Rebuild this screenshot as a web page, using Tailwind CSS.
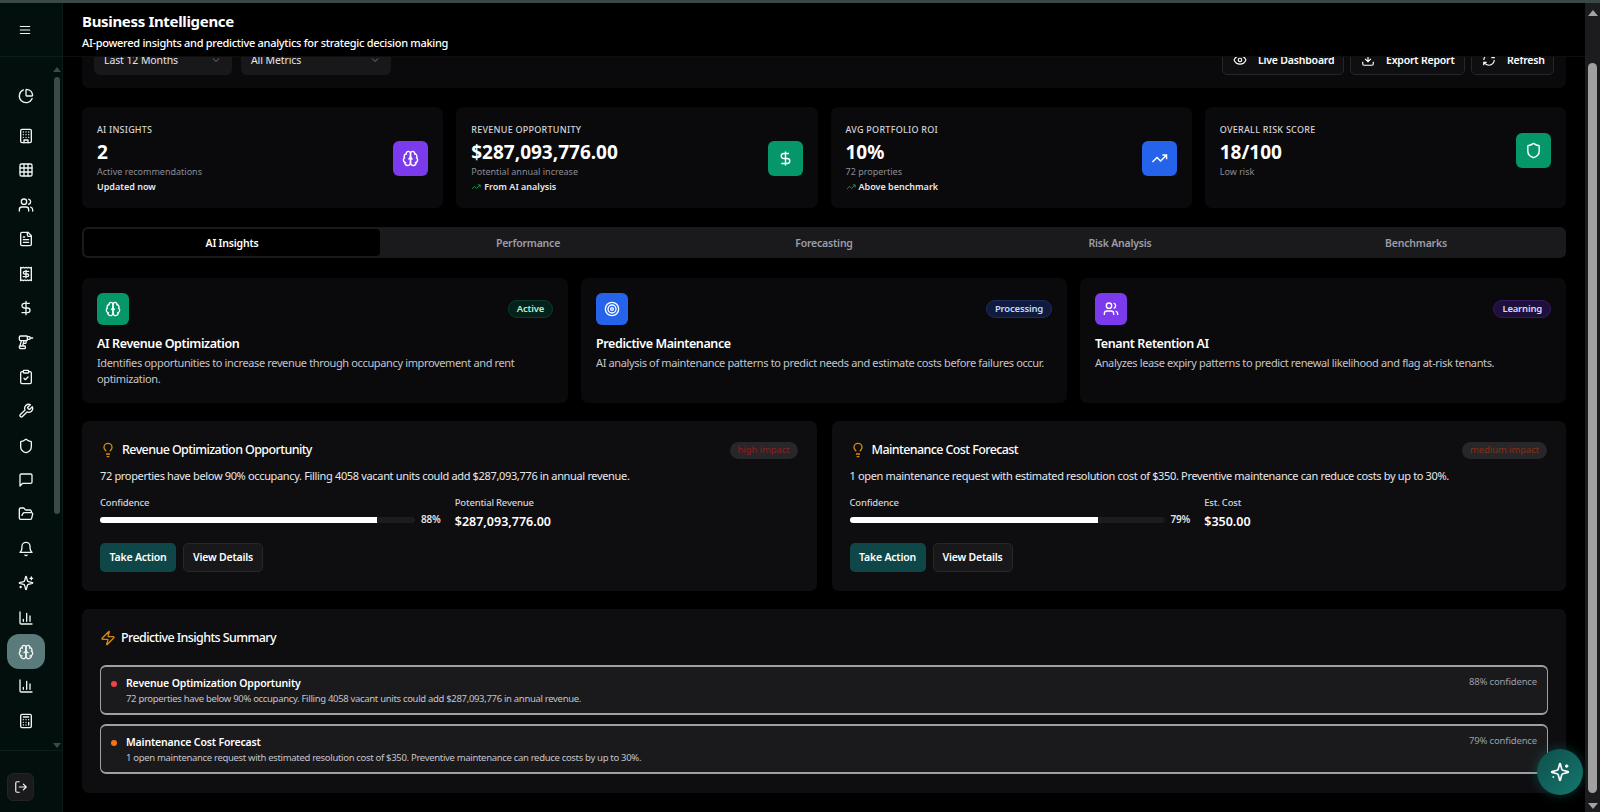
<!DOCTYPE html>
<html lang="en">
<head>
  <meta charset="UTF-8" />
  <title>Business Intelligence</title>
  <script src="https://cdn.jsdelivr.net/npm/@tailwindcss/browser@4"></script>
</head>
<body class="w-[1600px] h-[812px] overflow-hidden bg-black text-white font-['Noto_Sans',sans-serif] flex flex-col">
  <!-- icon sprite -->
  <svg class="hidden" xmlns="http://www.w3.org/2000/svg">
    <symbol id="i-menu" viewBox="0 0 24 24"><path d="M4 6h16M4 12h16M4 18h16"/></symbol>
    <symbol id="i-pie" viewBox="0 0 24 24"><path d="M21 12c.552 0 1.005-.449.95-.998a10 10 0 0 0-8.953-8.951c-.55-.055-.998.398-.998.95v8a1 1 0 0 0 1 1z"/><path d="M21.21 15.89A10 10 0 1 1 8 2.83"/></symbol>
    <symbol id="i-building" viewBox="0 0 24 24"><rect x="4" y="2" width="16" height="20" rx="2"/><path d="M9 22v-4h6v4M8 6h.01M16 6h.01M12 6h.01M12 10h.01M12 14h.01M16 10h.01M16 14h.01M8 10h.01M8 14h.01"/></symbol>
    <symbol id="i-grid" viewBox="0 0 24 24"><rect x="3" y="3" width="18" height="18" rx="2"/><path d="M3 9h18M3 15h18M9 3v18M15 3v18"/></symbol>
    <symbol id="i-users" viewBox="0 0 24 24"><path d="M16 21v-2a4 4 0 0 0-4-4H6a4 4 0 0 0-4 4v2"/><circle cx="9" cy="7" r="4"/><path d="M22 21v-2a4 4 0 0 0-3-3.87M16 3.13a4 4 0 0 1 0 7.75"/></symbol>
    <symbol id="i-file" viewBox="0 0 24 24"><path d="M15 2H6a2 2 0 0 0-2 2v16a2 2 0 0 0 2 2h12a2 2 0 0 0 2-2V7Z"/><path d="M14 2v4a2 2 0 0 0 2 2h4M10 9H8M16 13H8M16 17H8"/></symbol>
    <symbol id="i-receipt" viewBox="0 0 24 24"><path d="M4 2v20l2-1 2 1 2-1 2 1 2-1 2 1 2-1 2 1V2l-2 1-2-1-2 1-2-1-2 1-2-1-2 1Z"/><path d="M16 8h-6a2 2 0 1 0 0 4h4a2 2 0 1 1 0 4H8M12 17.5v-11"/></symbol>
    <symbol id="i-dollar" viewBox="0 0 24 24"><path d="M12 2v20M17 5H9.5a3.5 3.5 0 0 0 0 7h5a3.5 3.5 0 0 1 0 7H6"/></symbol>
    <symbol id="i-drill" viewBox="0 0 24 24"><path d="M14 9c0 .6-.4 1-1 1H4a2 2 0 0 1-2-2V5a2 2 0 0 1 2-2h9c.6 0 1 .4 1 1Z"/><path d="M18 6h4M14 4h3a1 1 0 0 1 1 1v2a1 1 0 0 1-1 1h-3M5 10l-2 8M12 10v3c0 .6-.4 1-1 1H8M7 18l2-8M5 22c-1.7 0-3-1.3-3-3 0-.6.4-1 1-1h7c.6 0 1 .4 1 1v2c0 .6-.4 1-1 1Z"/></symbol>
    <symbol id="i-clipboard" viewBox="0 0 24 24"><rect x="8" y="2" width="8" height="4" rx="1"/><path d="M16 4h2a2 2 0 0 1 2 2v14a2 2 0 0 1-2 2H6a2 2 0 0 1-2-2V6a2 2 0 0 1 2-2h2M9 14l2 2 4-4"/></symbol>
    <symbol id="i-wrench" viewBox="0 0 24 24"><path d="M14.7 6.3a1 1 0 0 0 0 1.4l1.6 1.6a1 1 0 0 0 1.4 0l3.77-3.77a6 6 0 0 1-7.94 7.94l-6.91 6.91a2.12 2.12 0 0 1-3-3l6.91-6.91a6 6 0 0 1 7.94-7.94l-3.76 3.76z"/></symbol>
    <symbol id="i-shield" viewBox="0 0 24 24"><path d="M20 13c0 5-3.5 7.5-7.66 8.95a1 1 0 0 1-.67-.01C7.5 20.5 4 18 4 13V6a1 1 0 0 1 1-1c2 0 4.5-1.2 6.24-2.72a1.17 1.17 0 0 1 1.52 0C14.51 3.81 17 5 19 5a1 1 0 0 1 1 1z"/></symbol>
    <symbol id="i-message" viewBox="0 0 24 24"><path d="M21 15a2 2 0 0 1-2 2H7l-4 4V5a2 2 0 0 1 2-2h14a2 2 0 0 1 2 2z"/></symbol>
    <symbol id="i-folder" viewBox="0 0 24 24"><path d="m6 14 1.5-2.9A2 2 0 0 1 9.24 10H20a2 2 0 0 1 1.94 2.5l-1.54 6a2 2 0 0 1-1.95 1.5H4a2 2 0 0 1-2-2V5a2 2 0 0 1 2-2h3.9a2 2 0 0 1 1.69.9l.81 1.2a2 2 0 0 0 1.67.9H18a2 2 0 0 1 2 2v2"/></symbol>
    <symbol id="i-bell" viewBox="0 0 24 24"><path d="M6 8a6 6 0 0 1 12 0c0 7 3 9 3 9H3s3-2 3-9M10.3 21a1.94 1.94 0 0 0 3.4 0"/></symbol>
    <symbol id="i-sparkles" viewBox="0 0 24 24"><path d="M9.937 15.5A2 2 0 0 0 8.5 14.063l-6.135-1.582a.5.5 0 0 1 0-.962L8.5 9.936A2 2 0 0 0 9.937 8.5l1.582-6.135a.5.5 0 0 1 .963 0L14.063 8.5A2 2 0 0 0 15.5 9.937l6.135 1.581a.5.5 0 0 1 0 .964L15.5 14.063a2 2 0 0 0-1.437 1.437l-1.582 6.135a.5.5 0 0 1-.963 0z"/><path d="M20 3v4M22 5h-4M4 17v2M5 18H3"/></symbol>
    <symbol id="i-chart" viewBox="0 0 24 24"><path d="M3 3v16a2 2 0 0 0 2 2h16M18 17V9M13 17V5M8 17v-3"/></symbol>
    <symbol id="i-brain" viewBox="0 0 24 24"><path d="M12 5a3 3 0 1 0-5.997.125 4 4 0 0 0-2.526 5.77 4 4 0 0 0 .556 6.588A4 4 0 1 0 12 18Z"/><path d="M12 5a3 3 0 1 1 5.997.125 4 4 0 0 1 2.526 5.77 4 4 0 0 1-.556 6.588A4 4 0 1 1 12 18Z"/><path d="M15 13a4.5 4.5 0 0 1-3-4 4.5 4.5 0 0 1-3 4M17.599 6.5a3 3 0 0 0 .399-1.375M6.003 5.125A3 3 0 0 0 6.401 6.5M3.477 10.896a4 4 0 0 1 .585-.396M19.938 10.5a4 4 0 0 1 .585.396M6 18a4 4 0 0 1-1.967-.516M19.967 17.484A4 4 0 0 1 18 18"/></symbol>
    <symbol id="i-calc" viewBox="0 0 24 24"><rect x="4" y="2" width="16" height="20" rx="2"/><path d="M8 6h8M16 14v4M16 10h.01M12 10h.01M8 10h.01M12 14h.01M8 14h.01M12 18h.01M8 18h.01"/></symbol>
    <symbol id="i-logout" viewBox="0 0 24 24"><path d="M9 21H5a2 2 0 0 1-2-2V5a2 2 0 0 1 2-2h4M16 17l5-5-5-5M21 12H9"/></symbol>
    <symbol id="i-eye" viewBox="0 0 24 24"><path d="M2.062 12.348a1 1 0 0 1 0-.696 10.75 10.75 0 0 1 19.876 0 1 1 0 0 1 0 .696 10.75 10.75 0 0 1-19.876 0"/><circle cx="12" cy="12" r="3"/></symbol>
    <symbol id="i-download" viewBox="0 0 24 24"><path d="M21 15v4a2 2 0 0 1-2 2H5a2 2 0 0 1-2-2v-4M7 10l5 5 5-5M12 15V3"/></symbol>
    <symbol id="i-refresh" viewBox="0 0 24 24"><path d="M3 12a9 9 0 0 1 9-9 9.75 9.75 0 0 1 6.74 2.74L21 8M21 3v5h-5M21 12a9 9 0 0 1-9 9 9.75 9.75 0 0 1-6.74-2.74L3 16M8 16H3v5"/></symbol>
    <symbol id="i-trend" viewBox="0 0 24 24"><path d="M22 7l-8.5 8.5-5-5L2 17M16 7h6v6"/></symbol>
    <symbol id="i-target" viewBox="0 0 24 24"><circle cx="12" cy="12" r="10"/><circle cx="12" cy="12" r="6"/><circle cx="12" cy="12" r="2"/></symbol>
    <symbol id="i-bulb" viewBox="0 0 24 24"><path d="M15 14c.2-1 .7-1.7 1.5-2.5 1-.9 1.5-2.2 1.5-3.5A6 6 0 0 0 6 8c0 1 .2 2.2 1.5 3.5.7.7 1.3 1.5 1.5 2.5M9 18h6M10 22h4"/></symbol>
    <symbol id="i-zap" viewBox="0 0 24 24"><path d="M4 14a1 1 0 0 1-.78-1.63l9.9-10.2a.5.5 0 0 1 .86.46l-1.92 6.02A1 1 0 0 0 13 10h7a1 1 0 0 1 .78 1.63l-9.9 10.2a.5.5 0 0 1-.86-.46l1.92-6.02A1 1 0 0 0 11 14z"/></symbol>
    <symbol id="i-chevron" viewBox="0 0 24 24"><path d="m6 9 6 6 6-6"/></symbol>
  </svg>

  <div class="h-[3px] shrink-0 bg-[#3a4947]"></div>

  <div class="flex flex-1 min-h-0">
    <!-- sidebar -->
    <aside class="w-[63px] shrink-0 flex flex-col bg-[#020f0d] border-r border-[#0b1a18] text-[#f2f5f4]">
      <div class="h-[54px] shrink-0 flex items-center pl-[18px] border-b border-[#0d1d1a]">
        <svg class="w-[14px] h-[14px] fill-none stroke-current stroke-2 [stroke-linecap:round] [stroke-linejoin:round]"><use href="#i-menu"/></svg>
      </div>
      <div class="flex-1 min-h-0 flex">
        <nav class="w-[51px] pt-[21.5px] flex flex-col items-center [&>div]:h-[34.4px] [&>div]:w-full [&>div]:flex [&>div]:items-center [&>div]:justify-center [&_svg]:w-[16px] [&_svg]:h-[16px] [&_svg]:fill-none [&_svg]:stroke-current [&_svg]:stroke-2 [&_svg]:[stroke-linecap:round] [&_svg]:[stroke-linejoin:round]">
          <div class="mb-[6px]"><svg><use href="#i-pie"/></svg></div>
          <div><svg><use href="#i-building"/></svg></div>
          <div><svg><use href="#i-grid"/></svg></div>
          <div><svg><use href="#i-users"/></svg></div>
          <div><svg><use href="#i-file"/></svg></div>
          <div><svg><use href="#i-receipt"/></svg></div>
          <div><svg><use href="#i-dollar"/></svg></div>
          <div><svg><use href="#i-drill"/></svg></div>
          <div><svg><use href="#i-clipboard"/></svg></div>
          <div><svg><use href="#i-wrench"/></svg></div>
          <div><svg><use href="#i-shield"/></svg></div>
          <div><svg><use href="#i-message"/></svg></div>
          <div><svg><use href="#i-folder"/></svg></div>
          <div><svg><use href="#i-bell"/></svg></div>
          <div><svg><use href="#i-sparkles"/></svg></div>
          <div><svg><use href="#i-chart"/></svg></div>
          <div><span class="w-[38px] h-[35px] rounded-[12px] bg-[#5a7a7c] flex items-center justify-center"><svg><use href="#i-brain"/></svg></span></div>
          <div><svg><use href="#i-chart"/></svg></div>
          <div><svg><use href="#i-calc"/></svg></div>
        </nav>
        <!-- sidebar scrollbar -->
        <div class="w-[11px] pt-[10px] flex flex-col items-center">
          <div class="w-0 h-0 border-x-[4px] border-x-transparent border-b-[5px] border-b-[#3a4b47]"></div>
          <div class="w-[6px] h-[437px] mt-[5px] rounded-full bg-[#3a4b47]"></div>
          <div class="w-0 h-0 mt-auto mb-[2px] border-x-[4px] border-x-transparent border-t-[5px] border-t-[#3a4b47]"></div>
        </div>
      </div>
      <div class="h-[62px] shrink-0 border-t border-[#0d1d1a] pt-[22px] pl-[7px]">
        <div class="w-[27px] h-[28px] rounded-[6px] bg-[#1a1a1c] border border-[#232326] flex items-center justify-center">
          <svg class="w-[14px] h-[14px] fill-none stroke-current stroke-2 [stroke-linecap:round] [stroke-linejoin:round]"><use href="#i-logout"/></svg>
        </div>
      </div>
    </aside>

    <!-- main -->
    <main class="relative flex-1 min-w-0 overflow-hidden">
      <header class="absolute inset-x-0 top-0 z-10 h-[54px] bg-black border-b border-[#0e0e10] pl-[19px] pt-[8px]">
        <h1 class="text-[15px] leading-[20px] font-bold tracking-[-0.33px]">Business Intelligence</h1>
        <p class="mt-[2px] text-[11px] leading-[20px] font-medium tracking-[-0.29px] text-white">AI-powered insights and predictive analytics for strategic decision making</p>
      </header>

      <div class="pt-[23px] pl-[19px] pr-[19px] flex flex-col">
        <!-- filters -->
        <section class="h-[62px] rounded-[7px] bg-[#0a0a0d] pl-[12px] pr-[12px] flex items-end justify-between pb-[13px]">
          <div class="flex gap-[9px]">
            <div class="w-[138px] h-[30px] rounded-[6px] bg-[#18181b] pl-[10px] pr-[10px] flex items-end justify-between pb-[7px] text-[10.5px] leading-[16px] tracking-[-0.1px] text-[#e4e4e7]"><span>Last 12 Months</span><svg class="w-[12px] h-[12px] mb-[2px] fill-none stroke-[#71717a] stroke-2"><use href="#i-chevron"/></svg></div>
            <div class="w-[150px] h-[30px] rounded-[6px] bg-[#18181b] pl-[10px] pr-[10px] flex items-end justify-between pb-[7px] text-[10.5px] leading-[16px] tracking-[-0.1px] text-[#e4e4e7]"><span>All Metrics</span><svg class="w-[12px] h-[12px] mb-[2px] fill-none stroke-[#71717a] stroke-2"><use href="#i-chevron"/></svg></div>
          </div>
          <div class="flex gap-[6px] text-[10.5px] leading-[16px] font-semibold tracking-[-0.2px]">
            <div class="w-[122px] h-[30px] rounded-[5px] bg-[#0f0f12] border border-[#26262a] pl-[10px] flex items-end gap-[11px] pb-[6px]"><svg class="w-[14px] h-[14px] mb-[1px] fill-none stroke-white stroke-2"><use href="#i-eye"/></svg>Live Dashboard</div>
            <div class="w-[115px] h-[30px] rounded-[5px] bg-[#0f0f12] border border-[#26262a] pl-[10px] flex items-end gap-[11px] pb-[6px]"><svg class="w-[14px] h-[14px] mb-[1px] fill-none stroke-white stroke-2"><use href="#i-download"/></svg>Export Report</div>
            <div class="w-[83px] h-[30px] rounded-[5px] bg-[#0f0f12] border border-[#26262a] pl-[10px] flex items-end gap-[11px] pb-[6px]"><svg class="w-[14px] h-[14px] mb-[1px] fill-none stroke-white stroke-2"><use href="#i-refresh"/></svg>Refresh</div>
          </div>
        </section>

        <!-- stats -->
        <section class="mt-[19px] grid grid-cols-4 gap-[13px]">
          <div class="h-[101px] rounded-[7px] bg-[#0a0a0d] pt-[15px] px-[15px]">
            <div class="flex items-center justify-between">
              <div>
                <p class="text-[9px] leading-[15px] font-medium tracking-[0.2px] text-[#d4d4d8]">AI INSIGHTS</p>
                <p class="mt-[1px] -mb-[2px] text-[19px] leading-[28px] font-bold">2</p>
                <p class="text-[9px] leading-[15px] text-[#8c8c94]">Active recommendations</p>
                <p class="text-[9px] leading-[15px] font-semibold text-[#e8e8ea]">Updated now</p>
              </div>
              <div class="w-[35px] h-[35px] rounded-[6px] bg-[#7c3aed] flex items-center justify-center"><svg class="w-[17px] h-[17px] fill-none stroke-white stroke-2"><use href="#i-brain"/></svg></div>
            </div>
          </div>
          <div class="h-[101px] rounded-[7px] bg-[#0a0a0d] pt-[15px] px-[15px]">
            <div class="flex items-center justify-between">
              <div>
                <p class="text-[9px] leading-[15px] font-medium tracking-[0.25px] text-[#d4d4d8]">REVENUE OPPORTUNITY</p>
                <p class="mt-[1px] -mb-[2px] text-[19px] leading-[28px] font-bold">$287,093,776.00</p>
                <p class="text-[9px] leading-[15px] text-[#8c8c94]">Potential annual increase</p>
                <p class="flex items-center gap-[3px] text-[9px] leading-[15px] font-semibold text-[#e8e8ea]"><svg class="w-[10px] h-[10px] fill-none stroke-[#22a55b] stroke-2"><use href="#i-trend"/></svg>From AI analysis</p>
              </div>
              <div class="w-[35px] h-[35px] rounded-[6px] bg-[#059669] flex items-center justify-center"><svg class="w-[17px] h-[17px] fill-none stroke-white stroke-2"><use href="#i-dollar"/></svg></div>
            </div>
          </div>
          <div class="h-[101px] rounded-[7px] bg-[#0a0a0d] pt-[15px] px-[15px]">
            <div class="flex items-center justify-between">
              <div>
                <p class="text-[9px] leading-[15px] font-medium tracking-[0.25px] text-[#d4d4d8]">AVG PORTFOLIO ROI</p>
                <p class="mt-[1px] -mb-[2px] text-[19px] leading-[28px] font-bold">10%</p>
                <p class="text-[9px] leading-[15px] text-[#8c8c94]">72 properties</p>
                <p class="flex items-center gap-[3px] text-[9px] leading-[15px] font-semibold text-[#e8e8ea]"><svg class="w-[10px] h-[10px] fill-none stroke-[#22a55b] stroke-2"><use href="#i-trend"/></svg>Above benchmark</p>
              </div>
              <div class="w-[35px] h-[35px] rounded-[6px] bg-[#2563eb] flex items-center justify-center"><svg class="w-[17px] h-[17px] fill-none stroke-white stroke-2"><use href="#i-trend"/></svg></div>
            </div>
          </div>
          <div class="h-[101px] rounded-[7px] bg-[#0a0a0d] pt-[15px] px-[15px]">
            <div class="flex items-center justify-between">
              <div>
                <p class="text-[9px] leading-[15px] font-medium tracking-[0.25px] text-[#d4d4d8]">OVERALL RISK SCORE</p>
                <p class="mt-[1px] -mb-[2px] text-[19px] leading-[28px] font-bold">18/100</p>
                <p class="text-[9px] leading-[15px] text-[#8c8c94]">Low risk</p>
              </div>
              <div class="w-[35px] h-[35px] rounded-[6px] bg-[#059669] flex items-center justify-center"><svg class="w-[17px] h-[17px] fill-none stroke-white stroke-2"><use href="#i-shield"/></svg></div>
            </div>
          </div>
        </section>

        <!-- tabs -->
        <nav class="mt-[19px] h-[31px] rounded-[6px] bg-[#1a1a1d] p-[2px] grid grid-cols-5 text-[10.5px] font-semibold tracking-[-0.2px] text-[#9d9da5]">
          <div class="rounded-[4px] bg-black text-white flex items-center justify-center pt-[2px]">AI Insights</div>
          <div class="flex items-center justify-center pt-[2px]">Performance</div>
          <div class="flex items-center justify-center pt-[2px]">Forecasting</div>
          <div class="flex items-center justify-center pt-[2px]">Risk Analysis</div>
          <div class="flex items-center justify-center pt-[2px]">Benchmarks</div>
        </nav>

        <!-- ai features -->
        <section class="mt-[20px] grid grid-cols-3 gap-[13px]">
          <div class="h-[125px] rounded-[7px] bg-[#0a0a0d] p-[15px]">
            <div class="flex items-center justify-between">
              <div class="w-[32px] h-[32px] rounded-[6px] bg-[#059669] flex items-center justify-center"><svg class="w-[16px] h-[16px] fill-none stroke-white stroke-2"><use href="#i-brain"/></svg></div>
              <span class="h-[18px] px-[8px] rounded-full bg-[#04211b] border border-[#0c3a2e] flex items-center text-[9.5px] font-semibold tracking-[-0.2px] text-[#a7f3d0]">Active</span>
            </div>
            <h3 class="mt-[9px] text-[12.5px] leading-[20px] font-semibold tracking-[-0.4px]">AI Revenue Optimization</h3>
            <p class="mt-[1px] text-[11px] leading-[16px] tracking-[-0.36px] text-[#c4c4cb]">Identifies opportunities to increase revenue through occupancy improvement and rent optimization.</p>
          </div>
          <div class="h-[125px] rounded-[7px] bg-[#0a0a0d] p-[15px]">
            <div class="flex items-center justify-between">
              <div class="w-[32px] h-[32px] rounded-[6px] bg-[#2563eb] flex items-center justify-center"><svg class="w-[16px] h-[16px] fill-none stroke-white stroke-2"><use href="#i-target"/></svg></div>
              <span class="h-[18px] px-[8px] rounded-full bg-[#0f1a3d] border border-[#1c2c5e] flex items-center text-[9.5px] font-semibold tracking-[-0.2px] text-[#bfdbfe]">Processing</span>
            </div>
            <h3 class="mt-[9px] text-[12.5px] leading-[20px] font-semibold tracking-[-0.4px]">Predictive Maintenance</h3>
            <p class="mt-[1px] text-[11px] leading-[16px] tracking-[-0.36px] text-[#c4c4cb]">AI analysis of maintenance patterns to predict needs and estimate costs before failures occur.</p>
          </div>
          <div class="h-[125px] rounded-[7px] bg-[#0a0a0d] p-[15px]">
            <div class="flex items-center justify-between">
              <div class="w-[32px] h-[32px] rounded-[6px] bg-[#7c3aed] flex items-center justify-center"><svg class="w-[16px] h-[16px] fill-none stroke-white stroke-2"><use href="#i-users"/></svg></div>
              <span class="h-[18px] px-[8px] rounded-full bg-[#1f0f3d] border border-[#33195e] flex items-center text-[9.5px] font-semibold tracking-[-0.2px] text-[#ddd6fe]">Learning</span>
            </div>
            <h3 class="mt-[9px] text-[12.5px] leading-[20px] font-semibold tracking-[-0.4px]">Tenant Retention AI</h3>
            <p class="mt-[1px] text-[11px] leading-[16px] tracking-[-0.36px] text-[#c4c4cb]">Analyzes lease expiry patterns to predict renewal likelihood and flag at-risk tenants.</p>
          </div>
        </section>

        <!-- recommendations -->
        <section class="mt-[18px] grid grid-cols-2 gap-[15px]">
          <div class="h-[170px] rounded-[7px] bg-[#0e0e11] pl-[18px] pr-[19px] pt-[19px]">
            <div class="h-[20px] flex items-center justify-between">
              <h3 class="flex items-center gap-[6px] text-[12.5px] font-medium tracking-[-0.6px]"><svg class="w-[16px] h-[16px] fill-none stroke-[#d98a0b] stroke-2"><use href="#i-bulb"/></svg>Revenue Optimization Opportunity</h3>
              <span class="h-[17px] px-[8px] rounded-full bg-[#27272a] flex items-center text-[9.5px] tracking-[-0.1px] text-[#8a2020]">high impact</span>
            </div>
            <p class="mt-[8px] text-[11px] leading-[16px] tracking-[-0.34px] text-[#e8e8ea]">72 properties have below 90% occupancy. Filling 4058 vacant units could add $287,093,776 in annual revenue.</p>
            <div class="mt-[11px] grid grid-cols-2 gap-[12px]">
              <div>
                <p class="text-[9.5px] leading-[15px] font-medium tracking-[-0.2px] text-[#d4d4d8]">Confidence</p>
                <div class="mt-[2px] flex items-center gap-[6px]">
                  <div class="w-[315px] h-[6px] rounded-full bg-[#1c1c1f] overflow-hidden"><div class="h-full w-[88%] bg-white"></div></div>
                  <span class="text-[10px] font-semibold tracking-[-0.2px] text-[#e4e4e7]">88%</span>
                </div>
              </div>
              <div>
                <p class="text-[9.5px] leading-[15px] font-medium tracking-[-0.2px] text-[#d4d4d8]">Potential Revenue</p>
                <p class="mt-[2px] text-[12.5px] leading-[20px] font-semibold">$287,093,776.00</p>
              </div>
            </div>
            <div class="mt-[11px] flex gap-[7px] text-[10.5px] font-semibold tracking-[-0.2px]">
              <div class="w-[76px] h-[29px] rounded-[5px] bg-[#0f4748] flex items-center justify-center">Take Action</div>
              <div class="w-[80px] h-[29px] rounded-[5px] bg-[#18181b] border border-[#27272a] flex items-center justify-center">View Details</div>
            </div>
          </div>
          <div class="h-[170px] rounded-[7px] bg-[#0e0e11] pl-[18px] pr-[19px] pt-[19px]">
            <div class="h-[20px] flex items-center justify-between">
              <h3 class="flex items-center gap-[6px] text-[12.5px] font-medium tracking-[-0.6px]"><svg class="w-[16px] h-[16px] fill-none stroke-[#d98a0b] stroke-2"><use href="#i-bulb"/></svg>Maintenance Cost Forecast</h3>
              <span class="h-[17px] px-[8px] rounded-full bg-[#27272a] flex items-center text-[9.5px] tracking-[-0.1px] text-[#852f14]">medium impact</span>
            </div>
            <p class="mt-[8px] text-[11px] leading-[16px] tracking-[-0.34px] text-[#e8e8ea]">1 open maintenance request with estimated resolution cost of $350. Preventive maintenance can reduce costs by up to 30%.</p>
            <div class="mt-[11px] grid grid-cols-2 gap-[12px]">
              <div>
                <p class="text-[9.5px] leading-[15px] font-medium tracking-[-0.2px] text-[#d4d4d8]">Confidence</p>
                <div class="mt-[2px] flex items-center gap-[6px]">
                  <div class="w-[315px] h-[6px] rounded-full bg-[#1c1c1f] overflow-hidden"><div class="h-full w-[79%] bg-white"></div></div>
                  <span class="text-[10px] font-semibold tracking-[-0.2px] text-[#e4e4e7]">79%</span>
                </div>
              </div>
              <div>
                <p class="text-[9.5px] leading-[15px] font-medium tracking-[-0.2px] text-[#d4d4d8]">Est. Cost</p>
                <p class="mt-[2px] text-[12.5px] leading-[20px] font-semibold">$350.00</p>
              </div>
            </div>
            <div class="mt-[11px] flex gap-[7px] text-[10.5px] font-semibold tracking-[-0.2px]">
              <div class="w-[76px] h-[29px] rounded-[5px] bg-[#0f4748] flex items-center justify-center">Take Action</div>
              <div class="w-[80px] h-[29px] rounded-[5px] bg-[#18181b] border border-[#27272a] flex items-center justify-center">View Details</div>
            </div>
          </div>
        </section>

        <!-- summary -->
        <section class="mt-[18px] h-[184px] rounded-[7px] bg-[#0e0e11] px-[18px] pt-[19px]">
          <h3 class="h-[20px] flex items-center gap-[5px] text-[12.5px] font-medium tracking-[-0.6px]"><svg class="w-[16px] h-[16px] fill-none stroke-[#d98a0b] stroke-2"><use href="#i-zap"/></svg>Predictive Insights Summary</h3>
          <div class="mt-[17px] flex flex-col gap-[9px]">
            <div class="h-[50px] rounded-[6px] bg-[#1a1a1d] border-x border-y-2 border-[#a0a0a4] pl-[10px] pr-[10px] pt-[8px] flex items-start gap-[9px]">
              <span class="mt-[6px] w-[6px] h-[6px] rounded-full bg-[#ef4444]"></span>
              <div class="flex-1">
                <p class="text-[10.5px] leading-[16px] font-semibold tracking-[-0.15px]">Revenue Optimization Opportunity</p>
                <p class="text-[9.5px] leading-[16px] tracking-[-0.315px] text-[#c4c4cb]">72 properties have below 90% occupancy. Filling 4058 vacant units could add $287,093,776 in annual revenue.</p>
              </div>
              <span class="-mt-[1px] text-[9.5px] leading-[16px] tracking-[-0.15px] text-[#9d9da5]">88% confidence</span>
            </div>
            <div class="h-[50px] rounded-[6px] bg-[#1a1a1d] border-x border-y-2 border-[#a0a0a4] pl-[10px] pr-[10px] pt-[8px] flex items-start gap-[9px]">
              <span class="mt-[6px] w-[6px] h-[6px] rounded-full bg-[#f97316]"></span>
              <div class="flex-1">
                <p class="text-[10.5px] leading-[16px] font-semibold tracking-[-0.15px]">Maintenance Cost Forecast</p>
                <p class="text-[9.5px] leading-[16px] tracking-[-0.315px] text-[#c4c4cb]">1 open maintenance request with estimated resolution cost of $350. Preventive maintenance can reduce costs by up to 30%.</p>
              </div>
              <span class="-mt-[1px] text-[9.5px] leading-[16px] tracking-[-0.15px] text-[#9d9da5]">79% confidence</span>
            </div>
          </div>
        </section>
      </div>

      <!-- assistant button -->
      <div class="absolute right-[2px] top-[746px] z-20 w-[46px] h-[46px] rounded-full bg-gradient-to-br from-[#0f4f4d] to-[#14786c] shadow-[0_0_12px_rgba(20,120,108,0.45)] flex items-center justify-center">
        <svg class="w-[20px] h-[20px] fill-none stroke-white stroke-2"><use href="#i-sparkles"/></svg>
      </div>
    </main>

    <!-- page scrollbar -->
    <div class="w-[15px] shrink-0 bg-[#1c1c1e] flex flex-col items-center pt-[7px]">
      <div class="w-0 h-0 border-x-[5px] border-x-transparent border-b-[6px] border-b-[#a3a3a3]"></div>
      <div class="w-[9px] h-[730px] mt-[47px] rounded-full bg-[#a0a0a0]"></div>
      <div class="w-0 h-0 mt-auto mb-[3px] border-x-[5px] border-x-transparent border-t-[6px] border-t-[#a3a3a3]"></div>
    </div>
  </div>
</body>
</html>
